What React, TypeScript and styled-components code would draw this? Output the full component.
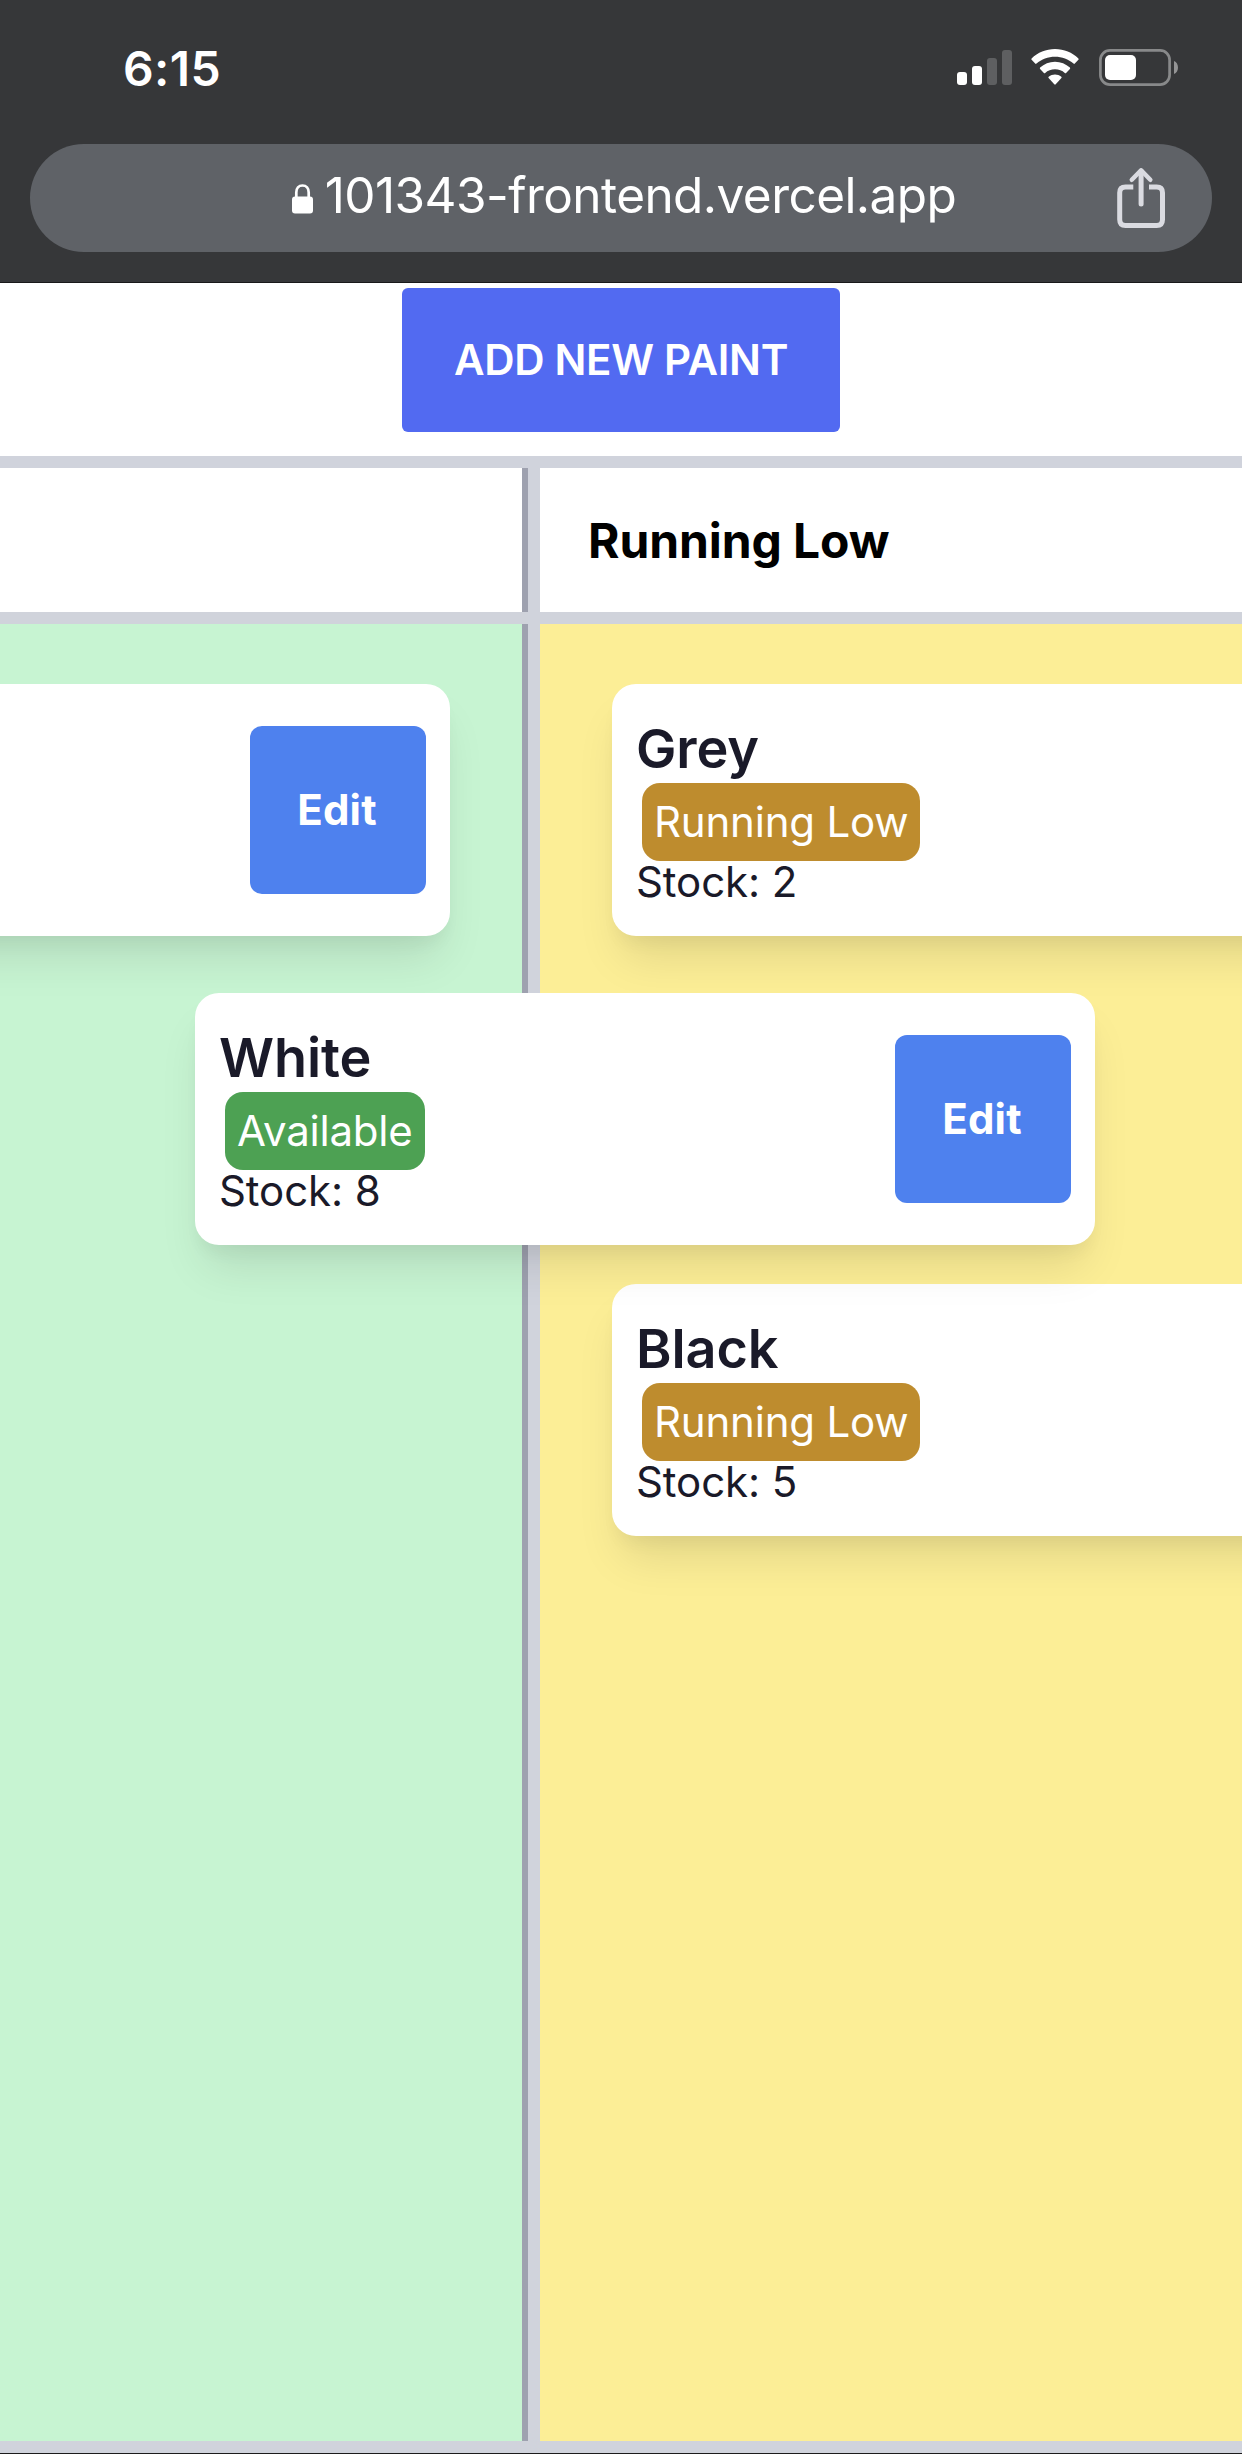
import React from "react";
import styled, { createGlobalStyle } from "styled-components";

const GlobalStyle = createGlobalStyle`
  *, *::before, *::after { box-sizing: border-box; }
  body {
    margin: 0;
    background: #ffffff;
    font-family: Inter, "Liberation Sans", sans-serif;
  }
`;

const Screen = styled.div`
  display: flex;
  flex-direction: column;
  width: 1242px;
  height: 2454px;
  overflow: hidden;
  background: #ffffff;
  border-bottom: 1px solid #1b1b1c;
`;

const BrowserChrome = styled.header`
  display: flex;
  flex-direction: column;
  flex: none;
  height: 283px;
  background: #363739;
  border-bottom: 1px solid #19191a;
`;

const StatusBar = styled.div`
  display: flex;
  align-items: center;
  justify-content: space-between;
  height: 136px;
  padding: 0 64px 0 123px;
`;

const Clock = styled.span`
  padding-top: 1px;
  font-size: 48px;
  line-height: 60px;
  font-weight: 600;
  letter-spacing: 0.4px;
  color: #ffffff;
`;

const StatusIcons = styled.div`
  display: flex;
  align-items: center;
  gap: 20px;
  svg { display: block; }
  svg:first-child { margin-right: -1px; }
`;

const AddressBar = styled.div`
  display: grid;
  grid-template-columns: 1fr auto 1fr;
  align-items: center;
  height: 108px;
  margin: 8px 30px 0;
  padding: 0 46px;
  border-radius: 54px;
  background: #5f6267;
`;

const Address = styled.div`
  grid-column: 2;
  display: flex;
  align-items: center;
  gap: 12px;
  padding-left: 6px;
  color: #ffffff;
  svg { display: block; margin-top: 1px; }
`;

const Url = styled.span`
  font-size: 49.5px;
  line-height: 60px;
  padding-bottom: 7px;
  letter-spacing: -0.56px;
  white-space: nowrap;
`;

const ShareButton = styled.div`
  justify-self: end;
  svg { display: block; }
`;

const ActionBar = styled.div`
  display: flex;
  justify-content: center;
  flex: none;
  height: 173px;
  padding-top: 5px;
`;

const AddButton = styled.button`
  width: 438px;
  height: 144px;
  padding: 0;
  border: 0;
  border-radius: 6px;
  background: #526af1;
  color: #ffffff;
  font-family: inherit;
  font-size: 42px;
  font-weight: 600;
  line-height: 60px;
  letter-spacing: -0.3px;
  white-space: nowrap;
`;

const Board = styled.main`
  position: relative;
  display: grid;
  grid-template-columns: 528px 1fr;
  flex: 1;
  border-top: 12px solid #d0d3dc;
  border-bottom: 12px solid #d0d3dc;
`;

const Column = styled.section<{ $side: "left" | "right" }>`
  display: flex;
  flex-direction: column;
  min-width: 0;
  ${(p) =>
    p.$side === "left"
      ? "border-right: 6px solid #9ea1af;"
      : "border-left: 12px solid #d0d3dc;"}
`;

const ColumnHeader = styled.div`
  display: flex;
  align-items: center;
  flex: none;
  height: 144px;
  padding: 2px 0 0 48px;
  background: #ffffff;
`;

const ColumnTitle = styled.h2`
  margin: 0;
  font-size: 48px;
  line-height: 72px;
  font-weight: 700;
  letter-spacing: -0.1px;
  color: #000000;
`;

const ColumnRule = styled.div`
  flex: none;
  height: 12px;
  margin-right: -6px;
  background: #d0d3db;
`;

const CardList = styled.div<{ $tone: string; $align: string }>`
  display: flex;
  flex-direction: column;
  align-items: ${(p) => p.$align};
  flex: 1;
  gap: 348px;
  padding: 60px 72px;
  background: ${(p) => p.$tone};
`;

const CardBox = styled.article`
  display: flex;
  align-items: center;
  justify-content: space-between;
  flex: none;
  width: 900px;
  height: 252px;
  padding: 24px;
  border-radius: 24px;
  background: #ffffff;
  color: #1a1a29;
  box-shadow: 0 30px 45px -9px rgba(0, 0, 0, 0.1),
    0 12px 18px -6px rgba(0, 0, 0, 0.05);
`;

const CardBody = styled.div`
  display: flex;
  flex-direction: column;
`;

const PaintName = styled.h3`
  margin: 0 0 3px;
  font-size: 54px;
  line-height: 81px;
  font-weight: 600;
  letter-spacing: -0.1px;
`;

const BadgeRow = styled.div`
  display: flex;
  align-items: center;
  height: 60px;
  padding-left: 6px;
`;

const Badge = styled.span<{ $color: string }>`
  padding: 9px 12px;
  border-radius: 18px;
  background: ${(p) => p.$color};
  color: #ffffff;
  font-size: 42px;
  line-height: 60px;
  font-weight: 400;
  letter-spacing: -0.2px;
  white-space: nowrap;
`;

const Stock = styled.p`
  margin: 0;
  font-size: 42px;
  line-height: 60px;
  font-weight: 400;
  letter-spacing: -0.1px;
`;

const EditButton = styled.button`
  flex: none;
  width: 176px;
  height: 168px;
  padding: 0 2px 0 0;
  border: 0;
  border-radius: 12px;
  background: #4e81ee;
  color: #ffffff;
  font-family: inherit;
  font-size: 42px;
  line-height: 60px;
  font-weight: 700;
  letter-spacing: 0.2px;
`;

const DraggedCard = styled.div`
  position: absolute;
  top: 525px;
  left: 195px;
`;

const STATUS_COLORS: Record<string, string> = {
  Available: "#4da153",
  "Running Low": "#be8c2e",
};

interface PaintCardProps {
  name?: string;
  status?: string;
  stock?: number;
  editable?: boolean;
}

function PaintCard({ name, status, stock, editable }: PaintCardProps) {
  return (
    <CardBox>
      <CardBody>
        {name && <PaintName>{name}</PaintName>}
        {status && (
          <BadgeRow>
            <Badge $color={STATUS_COLORS[status]}>{status}</Badge>
          </BadgeRow>
        )}
        {stock !== undefined && <Stock>Stock: {stock}</Stock>}
      </CardBody>
      {editable && <EditButton>Edit</EditButton>}
    </CardBox>
  );
}

const SignalIcon = () => (
  <svg width="55" height="38" viewBox="0 0 55 38" fill="#ffffff">
    <rect x="0" y="23" width="10" height="13" rx="3" />
    <rect x="15" y="17" width="10" height="19" rx="3" />
    <rect x="30" y="9" width="10" height="27" rx="3" fill="#5e5f61" />
    <rect x="45" y="1" width="10" height="35" rx="3" fill="#5e5f61" />
  </svg>
);

const WifiIcon = () => (
  <svg width="48" height="38" viewBox="0 0 48 38" fill="#ffffff">
    <path d="M24 0C33 0 41.300 3.500 47.400 9.400Q48 10 47.400 10.700L43.800 14.600Q43.200 15.200 42.500 14.600C37.500 10.200 31 7.800 24 7.800S10.500 10.200 5.500 14.600Q4.800 15.200 4.200 14.600L.6 10.700Q0 10 .6 9.400C6.700 3.500 15 0 24 0Z" />
    <path d="M24 12.800C29.700 12.800 34.900 15 38.900 18.600Q39.500 19.200 38.900 19.900L35.100 23.900Q34.500 24.500 33.800 23.900C31.200 21.600 27.800 20.300 24 20.300S16.800 21.600 14.200 23.900Q13.500 24.500 12.900 23.900L9.100 19.900Q8.500 19.200 9.100 18.600C13.100 15 18.300 12.800 24 12.800Z" />
    <path d="M24 25.600C26.300 25.600 28.500 26.400 30.300 27.800Q31 28.400 30.400 29.100L24.700 35.300Q24 36 23.300 35.300L17.600 29.100Q17 28.400 17.700 27.800C19.500 26.400 21.700 25.600 24 25.600Z" />
  </svg>
);

const BatteryIcon = () => (
  <svg width="79" height="38" viewBox="0 0 79 38">
    <rect x="1.400" y="1.400" width="69.200" height="34.200" rx="9.500" fill="none" stroke="#88898a" strokeWidth="2.700" />
    <rect x="6" y="6" width="31" height="25" rx="5" fill="#ffffff" />
    <path d="M75 12C80.300 14 80.300 23 75 25Z" fill="#949495" />
  </svg>
);

const LockIcon = () => (
  <svg width="21" height="30" viewBox="0 0 21 30">
    <path d="M4.300 14V8.500C4.300 4.300 6.700 1.500 10.500 1.500S16.700 4.300 16.700 8.500V14" fill="none" stroke="#ffffff" strokeWidth="2.700" />
    <rect x="0" y="12.500" width="21" height="17" rx="3" fill="#ffffff" />
  </svg>
);

const ShareIcon = () => (
  <svg width="49" height="62" viewBox="0 0 49 62" fill="none" stroke="#dadbe1" strokeWidth="5">
    <path d="M16.300 20H8.500Q2.700 20 2.700 25.800V52.500Q2.700 58.500 8.500 58.500H39.700Q45.500 58.500 45.500 52.500V25.800Q45.500 20 39.700 20H32" />
    <path d="M24.100 4V37" strokeLinecap="round" />
    <path d="M14.800 12.800L24.100 3.300L33.300 12.800" strokeWidth="4.500" strokeLinecap="round" strokeLinejoin="round" />
  </svg>
);

export default function App() {
  return (
    <>
      <GlobalStyle />
      <Screen>
        <BrowserChrome>
          <StatusBar>
            <Clock>6:15</Clock>
            <StatusIcons>
              <SignalIcon />
              <WifiIcon />
              <BatteryIcon />
            </StatusIcons>
          </StatusBar>
          <AddressBar>
            <Address>
              <LockIcon />
              <Url>101343-frontend.vercel.app</Url>
            </Address>
            <ShareButton>
              <ShareIcon />
            </ShareButton>
          </AddressBar>
        </BrowserChrome>
        <ActionBar>
          <AddButton>ADD NEW PAINT</AddButton>
        </ActionBar>
        <Board>
          <Column $side="left">
            <ColumnHeader />
            <ColumnRule />
            <CardList $tone="#c7f4d2" $align="flex-end">
              <PaintCard editable />
            </CardList>
          </Column>
          <Column $side="right">
            <ColumnHeader>
              <ColumnTitle>Running Low</ColumnTitle>
            </ColumnHeader>
            <ColumnRule />
            <CardList $tone="#fcee96" $align="flex-start">
              <PaintCard name="Grey" status="Running Low" stock={2} />
              <PaintCard name="Black" status="Running Low" stock={5} />
            </CardList>
          </Column>
          <DraggedCard>
            <PaintCard name="White" status="Available" stock={8} editable />
          </DraggedCard>
        </Board>
      </Screen>
    </>
  );
}
